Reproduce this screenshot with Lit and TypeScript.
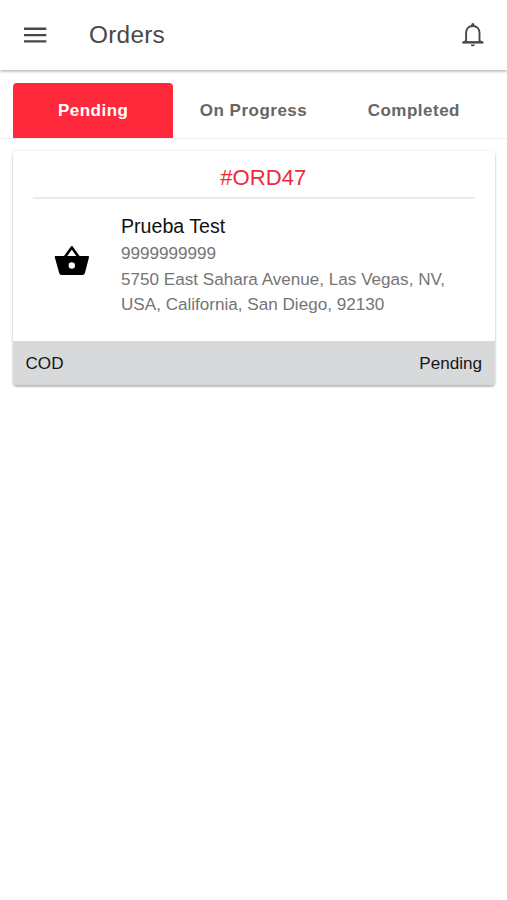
import { LitElement, html, css, svg } from "lit";
import { customElement, state } from "lit/decorators.js";
import { classMap } from "lit/directives/class-map.js";

interface Order {
  id: string;
  name: string;
  phone: string;
  address: string;
  payment: string;
  status: string;
}

const menuIcon = svg`<svg viewBox="0 0 24 18" width="24" height="18">
  <path d="M1 2.8h22.3M1 9.1h22.3M1 15.4h22.3" stroke="#484848" stroke-width="2.4" fill="none"/></svg>`;

const bellIcon = svg`<svg viewBox="0 0 22 26" width="22" height="26">
  <path d="M4.1 18.8V11C4.1 6.7 6.8 4 10.8 4S17.5 6.7 17.5 11v7.8l2.2 1.5H1.9z" fill="none" stroke="#484848" stroke-width="1.9"/>
  <path d="M.6 19.4h20.4v2H.6z" fill="#484848"/>
  <path d="M9.1 4.2c0-2.4.6-3.2 1.7-3.2s1.7.8 1.7 3.2zM8.6 22.4h4.4q-.5 1.9-2.2 1.9t-2.2-1.9z" fill="#484848"/></svg>`;

const basketIcon = svg`<svg viewBox="-.5 0 36 31" width="36" height="31">
  <path d="M10.4 12 17.3 2.4 24.2 12" fill="none" stroke="#000" stroke-width="2.6" stroke-linejoin="round"/>
  <path fill-rule="evenodd" d="M1.2 11h32.4q1.2 0 .9 1.2l-4 15.6q-.6 2.2-2.4 2.2H7q-1.9 0-2.4-2.2L.3 12.2Q0 11 1.2 11zm16.1 6.3a3.2 3.2 0 1 0 0 6.4a3.2 3.2 0 1 0 0-6.4z"/></svg>`;

@customElement("order-card")
class OrderCard extends LitElement {
  static properties = { order: { attribute: false } };
  declare order: Order;

  static styles = css`
    :host { display: block; border-radius: 4px; overflow: hidden; background: #fff;
      box-shadow: 0 2px 2px rgba(0,0,0,.24), 0 0 3px rgba(0,0,0,.13); }
    .number { height: 46px; margin: 0 20px; border-bottom: 2px solid #ebebeb; text-align: center;
      color: #ec2c3c; font-size: 22.1px; line-height: 53px; padding-left: 19px; }
    .body { display: flex; height: 142px; }
    .icon { width: 108px; padding: 46px 0 0 41px; box-sizing: border-box; flex: none; }
    .icon svg { display: block; }
    .details { padding-top: 14px; flex: 1; color: #757575; font-size: 17.1px; line-height: 24.5px; white-space: pre-line; }
    .name { color: #111; font-size: 19.6px; line-height: 26px; }
    .phone { line-height: 29px; }
    .footer { height: 44px; padding: 1px 12.5px 0; box-sizing: border-box; display: flex; align-items: center;
      justify-content: space-between; background: #d7d9db; color: #151515; font-size: 17.1px; }
  `;

  render() {
    const o = this.order;
    return html`
      <div class="number">${o.id}</div>
      <div class="body">
        <div class="icon">${basketIcon}</div>
        <div class="details"><div class="name">${o.name}</div><div class="phone">${o.phone}</div><div>${o.address}</div></div>
      </div>
      <div class="footer"><span>${o.payment}</span><span>${o.status}</span></div>`;
  }
}

@customElement("app-root")
class AppRoot extends LitElement {
  @state() private active = "Pending";

  private tabs = ["Pending", "On Progress", "Completed"];
  private orders: Order[] = [{
    id: "#ORD47",
    name: "Prueba Test",
    phone: "9999999999",
    address: "5750 East Sahara Avenue, Las Vegas, NV,\nUSA, California, San Diego, 92130",
    payment: "COD",
    status: "Pending",
  }];

  static styles = css`
    :host { display: block; min-height: 100vh; background: #fff; font-family: "Liberation Sans", Arial, sans-serif; }
    .bar { height: 70px; box-sizing: border-box; display: flex; align-items: center; padding: 0 23px;
      box-shadow: 0 1px 3px rgba(0,0,0,.38); color: #484848; }
    .title { flex: 1; margin: 0 0 0 42px; font-size: 24.4px; font-weight: 400; letter-spacing: .25px; }
    .tabs { display: flex; padding: 13px 13px 0; border-bottom: 1px solid #f0f0f0; }
    .tab { flex: 1; height: 55px; border: 0; padding: 0; background: none; border-radius: 4px 4px 0 0;
      font: bold 17px/53px "Liberation Sans", Arial, sans-serif; letter-spacing: .5px; color: #666; }
    .active { background: #ff293b; color: #fff; }
    .list { padding: 12px 12.5px 0 13px; }
  `;

  render() {
    return html`
      <header class="bar">${menuIcon}<h1 class="title">Orders</h1>${bellIcon}</header>
      <nav class="tabs">${this.tabs.map((t) => html`
        <button class=${classMap({ tab: true, active: t === this.active })} @click=${() => (this.active = t)}>${t}</button>`)}
      </nav>
      <main class="list">${this.orders.map((o) => html`<order-card .order=${o}></order-card>`)}</main>`;
  }
}
